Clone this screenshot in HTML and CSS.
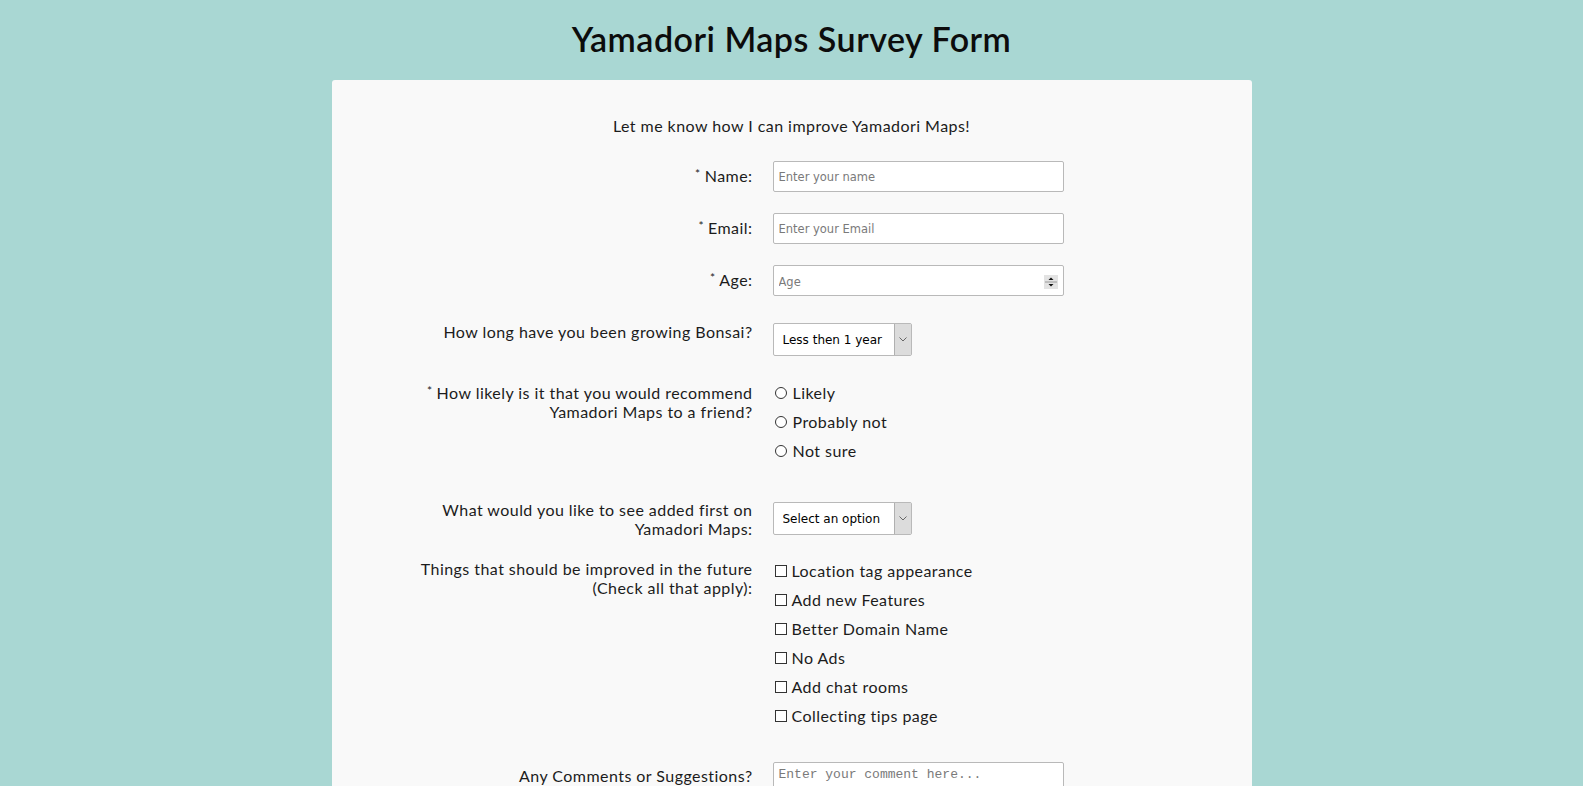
FILE: index.html
```html
<!DOCTYPE html>
<html lang="en">
<head>
<meta charset="utf-8">
<title>Yamadori Maps Survey Form</title>
<link rel="stylesheet" href="styles.css">
</head>
<body>
<h1 class="title">Yamadori Maps Survey Form</h1>
<main class="card">
  <p class="intro">Let me know how I can improve Yamadori Maps!</p>
  <form class="form">
    <div class="row row-name">
      <label class="lbl lbl-input" for="name"><span class="req">*</span> Name:</label>
      <input class="field" id="name" type="text" placeholder="Enter your name">
    </div>
    <div class="row row-gap21">
      <label class="lbl lbl-input" for="email"><span class="req">*</span> Email:</label>
      <input class="field" id="email" type="email" placeholder="Enter your Email">
    </div>
    <div class="row row-gap21">
      <label class="lbl lbl-input" for="age"><span class="req">*</span> Age:</label>
      <div class="number">
        <input class="field" id="age" type="number" placeholder="Age">
        <svg class="spin" width="14" height="14" viewBox="0 0 14 14" aria-hidden="true">
          <rect x="0" y="0" width="14" height="14" fill="#e3e3e3"/>
          <line x1="1" y1="7" x2="13" y2="7" stroke="#9a9a9a" stroke-width="1"/>
          <path d="M4.5 5 L7 2.5 L9.5 5 Z" fill="#111"/>
          <path d="M4.5 9 L7 11.5 L9.5 9 Z" fill="#111"/>
        </svg>
      </div>
    </div>
    <div class="row row-gap26">
      <label class="lbl" for="years">How long have you been growing Bonsai?</label>
      <div class="select sel-top1">
        <select id="years"><option>Less then 1 year</option><option>1-3 years</option><option>More than 3 years</option></select>
        <span class="arrow"><svg width="8" height="5" viewBox="0 0 8 5"><path d="M0.5 0.5 L4 4 L7.5 0.5" fill="none" stroke="#666" stroke-width="1"/></svg></span>
      </div>
    </div>
    <div class="row row-gap25">
      <p class="lbl"><span class="req">*</span> How likely is it that you would recommend Yamadori Maps to a friend?</p>
      <ul class="choices">
        <li><label><input class="radio" type="radio" name="rec"> Likely</label></li>
        <li><label><input class="radio" type="radio" name="rec"> Probably not</label></li>
        <li><label><input class="radio" type="radio" name="rec"> Not sure</label></li>
      </ul>
    </div>
    <div class="row row-gap35">
      <label class="lbl" for="first">What would you like to see added first on Yamadori Maps:</label>
      <div class="select sel-top2">
        <select id="first"><option>Select an option</option><option>Forum</option><option>Gallery</option></select>
        <span class="arrow"><svg width="8" height="5" viewBox="0 0 8 5"><path d="M0.5 0.5 L4 4 L7.5 0.5" fill="none" stroke="#666" stroke-width="1"/></svg></span>
      </div>
    </div>
    <div class="row row-gap21">
      <p class="lbl">Things that should be improved in the future (Check all that apply):</p>
      <ul class="choices">
        <li><label><input class="check" type="checkbox"> Location tag appearance</label></li>
        <li><label><input class="check" type="checkbox"> Add new Features</label></li>
        <li><label><input class="check" type="checkbox"> Better Domain Name</label></li>
        <li><label><input class="check" type="checkbox"> No Ads</label></li>
        <li><label><input class="check" type="checkbox"> Add chat rooms</label></li>
        <li><label><input class="check" type="checkbox"> Collecting tips page</label></li>
      </ul>
    </div>
    <div class="row row-gap32">
      <label class="lbl lbl-area" for="comments">Any Comments or Suggestions?</label>
      <textarea class="area" id="comments" placeholder="Enter your comment here..."></textarea>
    </div>
  </form>
</main>
</body>
</html>
```

FILE: styles.css
```css
* { box-sizing: border-box; }

html, body {
  margin: 0;
  padding: 0;
}

body {
  background: #a9d7d3;
  font-family: "Lato", "Open Sans", sans-serif;
  color: #1c1c1c;
  overflow: hidden;
}

.title {
  margin: 0;
  height: 80px;
  display: flex;
  align-items: center;
  justify-content: center;
  font-size: 34px;
  font-weight: 600;
  color: #0c0c0c;
  letter-spacing: 0.5px;
  padding-bottom: 3px;
}

.card {
  width: 920px;
  margin: 0 auto;
  background: #f9f9f9;
  border-radius: 3px 3px 0 0;
  padding-top: 36px;
  padding-bottom: 40px;
}

.intro {
  margin: 0;
  text-align: center;
  font-size: 16px;
  line-height: 19px;
  letter-spacing: 0.45px;
}

.form {
  display: flex;
  flex-direction: column;
  margin-top: 26px;
}

.row {
  display: flex;
  align-items: flex-start;
  gap: 20px;
}

.row-gap21 { margin-top: 21px; }
.row-gap25 { margin-top: 25px; }
.row-gap26 { margin-top: 26px; }
.row-gap32 { margin-top: 32px; }
.row-gap35 { margin-top: 35px; }

.lbl {
  flex: 0 0 421px;
  margin: 0;
  text-align: right;
  font-size: 16px;
  line-height: 19px;
  letter-spacing: 0.45px;
  padding-left: 70px;
}

.lbl-input { padding-top: 3px; }
.lbl-area { padding-top: 4px; }

.req {
  font-size: 12px;
  vertical-align: 4px;
  letter-spacing: 0;
}

.field {
  width: 291px;
  height: 31px;
  border: 1px solid #b9b9b9;
  border-radius: 2px;
  background: #fff;
  padding: 0 5px;
  font-family: "DejaVu Sans", sans-serif;
  font-size: 11.5px;
  color: #222;
  outline: none;
}

.field::placeholder,
.area::placeholder {
  color: #7a7a7a;
}

.number {
  position: relative;
  width: 291px;
}

.number input {
  -moz-appearance: textfield;
  appearance: textfield;
  padding-top: 2px;
}

.number input::-webkit-outer-spin-button,
.number input::-webkit-inner-spin-button {
  -webkit-appearance: none;
  margin: 0;
}

.spin {
  position: absolute;
  right: 6px;
  top: 10px;
}

.select {
  position: relative;
  width: 139px;
  height: 33px;
}

.sel-top1 { margin-top: 1px; }
.sel-top2 { margin-top: 2px; }

.select select {
  appearance: none;
  -webkit-appearance: none;
  width: 100%;
  height: 100%;
  border: 1px solid #b9b9b9;
  border-radius: 2px;
  background: #fff;
  padding: 0 0 0 9px;
  font-family: "DejaVu Sans", sans-serif;
  font-size: 12px;
  color: #000;
  outline: none;
}

.arrow {
  position: absolute;
  top: 1px;
  right: 1px;
  bottom: 1px;
  width: 17px;
  background: #dcdcdc;
  border-left: 1px solid #b0b0b0;
  display: flex;
  align-items: center;
  justify-content: center;
  pointer-events: none;
}

.choices {
  list-style: none;
  margin: -3px 0 0;
  padding: 0;
}

.choices li {
  height: 29px;
  display: flex;
  align-items: center;
  font-size: 16px;
  letter-spacing: 0.45px;
}

.choices label {
  display: flex;
  align-items: center;
}

.radio,
.check {
  appearance: none;
  -webkit-appearance: none;
  width: 12px;
  height: 12px;
  margin: 0 5px 0 2px;
  border: 1px solid #333;
  background: #fff;
  flex: none;
}

.radio {
  border-radius: 50%;
  margin-right: 6px;
}

.check {
  border-radius: 0;
  margin-right: 5px;
}

.area {
  width: 291px;
  height: 60px;
  border: 1px solid #b9b9b9;
  border-radius: 2px;
  background: #fff;
  padding: 4px 5px;
  font-family: "Liberation Mono", monospace;
  font-size: 13px;
  resize: none;
  outline: none;
}
```
